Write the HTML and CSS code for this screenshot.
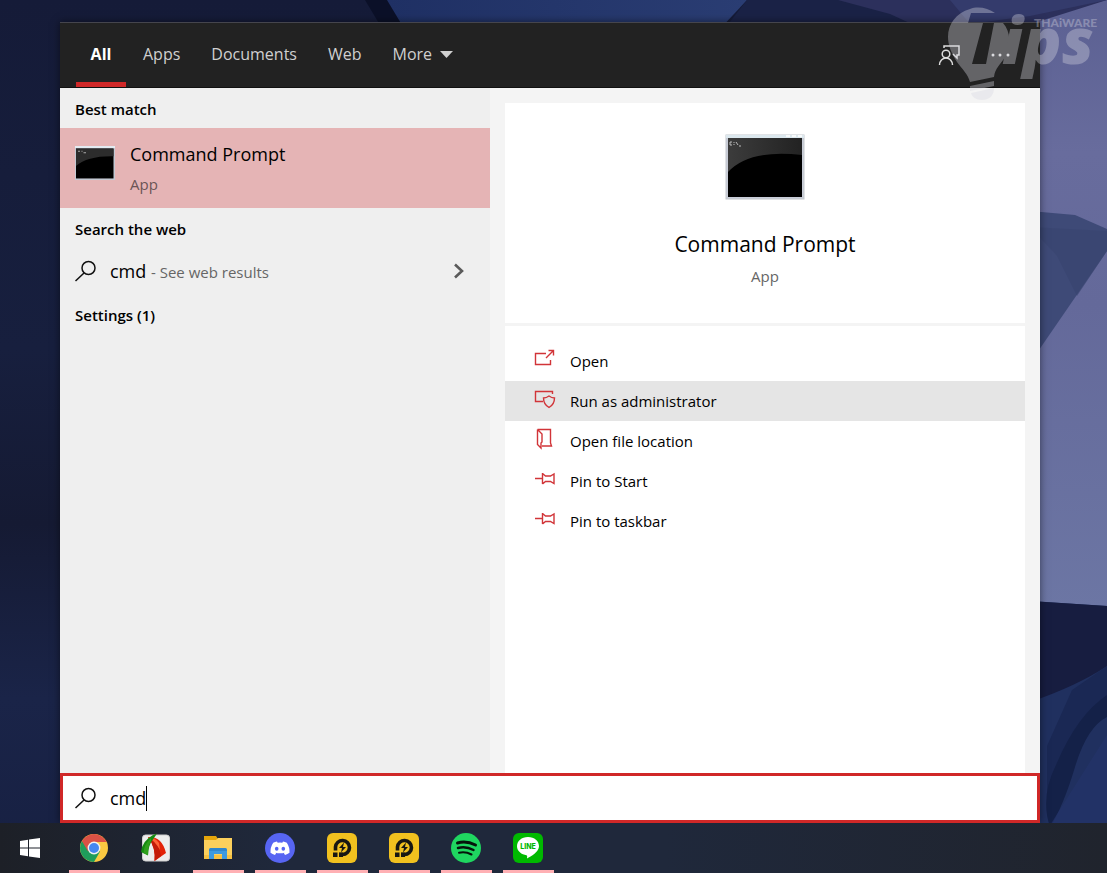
FILE: index.html
```
<!DOCTYPE html>
<html lang="en">
<head>
    <meta charset="UTF-8">
    <meta name="viewport" content="width=device-width, initial-scale=1.0">
    <link rel="stylesheet" href="styles.css">
    <title>Search</title>
</head>
<body>
    <!-- wallpaper -->
    <svg class="wallpaper" viewBox="0 0 1107 873" preserveAspectRatio="none" aria-hidden="true">
        <defs>
            <linearGradient id="left" x1="0" y1="0" x2="0" y2="1">
                <stop offset="0" stop-color="#151b38"/>
                <stop offset="0.4" stop-color="#171f3e"/>
                <stop offset="0.6" stop-color="#151a33"/>
                <stop offset="0.8" stop-color="#1a2448"/>
                <stop offset="1" stop-color="#172042"/>
            </linearGradient>
            <linearGradient id="top" x1="0" y1="0" x2="1" y2="0">
                <stop offset="0" stop-color="#1f3064"/>
                <stop offset="1" stop-color="#2a3d73"/>
            </linearGradient>
            <linearGradient id="right" x1="0" y1="0" x2="0" y2="1">
                <stop offset="0" stop-color="#5b6092"/>
                <stop offset="0.25" stop-color="#686c9d"/>
                <stop offset="0.5" stop-color="#64699a"/>
                <stop offset="1" stop-color="#6c76a4"/>
            </linearGradient>
        </defs>
        <rect width="1107" height="873" fill="url(#left)"/>
        <path d="M365 0h25l18 30h-25z" fill="#0b1028"/>
        <path d="M387 0h360l-28 30H405z" fill="url(#top)"/>
        <path d="M747 0h360v60H700z" fill="#1a2246"/>
        <path d="M838 0h269v60H990L890 14z" fill="#2c305c"/>
        <path d="M980 40L1107 0v610l-80-8z" fill="url(#right)"/>
        <path d="M970 24l60-8 77-16H950z" fill="#343b6c"/>
        <path d="M1030 211l45 4 32 14v22l-77 112z" fill="#3e4a77"/>
        <path d="M1030 227l77 4v20l-30 45-20-40z" fill="#394470" opacity=".6"/>
        <path d="M1030 601l77 5v267h-77z" fill="#20305f"/>
        <path d="M1030 601l77 5v60q-30 20-77 36z" fill="#171d40"/>
        <path d="M1072 690l35-24v30q-30 20-38 60l-22 50v-60z" fill="#1a2854"/>
        <path d="M1107 695v22q-20 10-32 50t-25 60q-10-30 6-62 21-50 51-70z" fill="#142148"/>
        <path d="M1107 735l-60 95h60z" fill="#24346a" opacity=".6"/>
    </svg>

    <main class="desktop">
        <section class="panel">
            <nav class="tabs">
                <button class="tab active">All</button>
                <button class="tab">Apps</button>
                <button class="tab">Documents</button>
                <button class="tab">Web</button>
                <button class="tab more">More
                    <svg width="13" height="7" viewBox="0 0 13 7"><path d="M0 0h13L6.500 7z" fill="currentColor"/></svg>
                </button>
                <div class="tools">
                    <button class="tool" aria-label="Feedback">
                        <svg width="22" height="22" viewBox="0 0 22 22" fill="none" stroke="#ddd" stroke-width="1.500">
                            <path d="M6 4V2h15v9h-2v3l-4-4"/>
                            <circle cx="8" cy="10" r="3.800"/>
                            <path d="M1.500 21c0-4 3-7 6.500-7s6.500 3 6.500 7"/>
                        </svg>
                    </button>
                    <button class="tool" aria-label="Options">
                        <svg width="20" height="22" viewBox="0 0 20 22" fill="#ddd"><circle cx="3" cy="11" r="1.500"/><circle cx="10" cy="11" r="1.500"/><circle cx="18" cy="11" r="1.500"/></svg>
                    </button>
                </div>
            </nav>

            <div class="content">
                <div class="results">
                    <h2 class="group">Best match</h2>
                    <button class="best">
                        <svg class="cmd-small" width="40" height="34" viewBox="0 0 80 66" preserveAspectRatio="none">
                            <rect width="80" height="66" fill="#c4c9d3"/>
                            <rect width="80" height="4" fill="#e3ebf1"/>
                            <rect x="2" y="5" width="75" height="58" fill="#000"/>
                            <path d="M2 5h75v15Q25 19 2 39z" fill="#2c2c2c"/>
                            <path d="M6 10h4m3 0h2m2 3h5" stroke="#aaa" stroke-width="2"/>
                        </svg>
                        <span class="names">
                            <span class="name">Command Prompt</span>
                            <span class="kind">App</span>
                        </span>
                    </button>
                    <h2 class="group">Search the web</h2>
                    <button class="web">
                        <svg width="22" height="22" viewBox="0 0 22 22" fill="none" stroke="#111" stroke-width="1.500"><circle cx="13.500" cy="8" r="6.500"/><path d="M9 13l-8.500 8"/></svg>
                        <span class="query">cmd <span class="hint">- See web results</span></span>
                        <svg class="chevron" width="10" height="16" viewBox="0 0 10 16" fill="none" stroke="#5a5a5a" stroke-width="2.600"><path d="M1 1.500L8 8l-7 6.500"/></svg>
                    </button>
                    <h2 class="group">Settings (1)</h2>
                </div>

                <div class="details">
                    <div class="app">
                        <svg width="80" height="66" viewBox="0 0 80 66">
                            <defs>
                                <linearGradient id="gloss" x1="0" y1="0" x2="1" y2="0">
                                    <stop offset="0" stop-color="#3c3c3c"/>
                                    <stop offset="1" stop-color="#222"/>
                                </linearGradient>
                            </defs>
                            <rect x="1" y="1" width="78" height="64" fill="#c9cdd8" stroke="#c3c8cd"/>
                            <rect x="1" y="1" width="78" height="3" fill="#dce8ee"/>
                            <path d="M61 2h4m2 0h4m2 0h4" stroke="#fff" stroke-width="1.500"/>
                            <rect x="3" y="4" width="74" height="59" fill="#000"/>
                            <path d="M3 4h74v17Q24 15 3 38z" fill="url(#gloss)"/>
                            <path d="M7 8H5v3h2M9 8v1m0 1v1m2-3l2 3m1 1h2" stroke="#bbb" fill="none"/>
                        </svg>
                        <h1>Command Prompt</h1>
                        <p>App</p>
                    </div>
                    <div class="actions">
                        <button class="action">
                            <svg width="22" height="22" viewBox="0 0 22 22"><path d="M12 5.500H1.500v11h15V12M12 10l7-7M14.500 2.500h5v5"/></svg>
                            Open
                        </button>
                        <button class="action selected">
                            <svg width="22" height="22" viewBox="0 0 22 22"><path d="M9 13.500H1.500v-10h17V6M15 8c-2 1.500-3.500 2-5.500 2 0 5 2 7.500 5.500 9.500 3.500-2 5.500-4.500 5.500-9.500-2 0-3.500-.5-5.500-2z"/></svg>
                            Run as administrator
                        </button>
                        <button class="action">
                            <svg width="22" height="22" viewBox="0 0 22 22"><path d="M3.500 1.500h13V15l1 3H8M3.500 1.500v15L7 20v-5l1-1V6L3.500 1.500"/></svg>
                            Open file location
                        </button>
                        <button class="action">
                            <svg width="22" height="22" viewBox="0 0 22 22"><path d="M1 10.500h7M8.500 5v11M8.500 5.500l3 2.500h5l3.500-2v9.500l-3.500-2h-5l-3 2.500"/></svg>
                            Pin to Start
                        </button>
                        <button class="action">
                            <svg width="22" height="22" viewBox="0 0 22 22"><path d="M1 10.500h7M8.500 5v11M8.500 5.500l3 2.500h5l3.500-2v9.500l-3.500-2h-5l-3 2.500"/></svg>
                            Pin to taskbar
                        </button>
                    </div>
                </div>
            </div>

            <label class="search">
                <svg width="22" height="22" viewBox="0 0 22 22" fill="none" stroke="#111" stroke-width="1.500"><circle cx="13.500" cy="8" r="6.500"/><path d="M9 13l-8.500 8"/></svg>
                <input type="text" value="cmd" size="3" aria-label="Search">
                <span class="caret"></span>
            </label>
        </section>
    </main>

    <footer class="taskbar">
        <button class="start" aria-label="Start">
            <svg width="20" height="20" viewBox="0 0 20 20" fill="#fff"><path d="M0 3l8-1.200V9.500H0zM9 1.600L20 0v9.500H9zM0 10.500h8v7.700L0 17zM9 10.500h11V20L9 18.400z"/></svg>
        </button>
        <button class="task open" aria-label="Chrome">
            <svg width="30" height="30" viewBox="0 0 30 30">
                <circle cx="15" cy="15" r="14" fill="#fbc941"/>
                <path d="M2.900 8A14 14 0 0 0 15 29l6-10.500-6-3.500z" fill="#1f9d5b"/>
                <path d="M2.900 8l6.200 10.500L15 9h12.600a14 14 0 0 0-.5-1A14 14 0 0 0 2.900 8z" fill="#db5145"/>
                <circle cx="15" cy="15" r="6.400" fill="#f1f1f1"/>
                <circle cx="15" cy="15" r="5" fill="#4587f0"/>
            </svg>
        </button>
        <button class="task" aria-label="FastStone Capture">
            <svg width="30" height="30" viewBox="0 0 30 30">
                <rect x="1.500" y="2" width="27" height="26" rx="3" fill="#ededed" stroke="#cfcfcf"/>
                <path d="M7 4Q21 3 25 20L13.500 28Q15 15 7 4z" fill="#e32208"/>
                <path d="M7 4Q18 8 20 23l-6.500 5Q15 15 7 4z" fill="#c41a08"/>
                <path d="M7 4q7 0 11 6l1 7Q14 8 7 4z" fill="#ff6236"/>
                <path d="M16 .5L12 2Q1 8 0 19l7 3.500Q7 12 13 5z" fill="#168a12"/>
                <path d="M10 5Q3 11 2.500 20L7 22Q7 13 10 8z" fill="#2fa01c"/>
            </svg>
        </button>
        <button class="task open" aria-label="File Explorer">
            <svg width="30" height="30" viewBox="0 0 30 30">
                <path d="M1 3h12l2 3h13v5H1z" fill="#e5a50b"/>
                <path d="M1 7h12l2-2h14v21H1z" fill="#fcd05c"/>
                <path d="M1 22h28v4H1z" fill="#f5c142"/>
                <path d="M6 26V17q0-2 2-2h14q2 0 2 2v9h-5v-5h-8v5z" fill="#3c9adf"/>
                <path d="M8 15h14q2 0 2 3H6q0-3 2-3z" fill="#2f86cc"/>
            </svg>
        </button>
        <button class="task open" aria-label="Discord">
            <svg width="30" height="30" viewBox="0 0 30 30">
                <circle cx="15" cy="15" r="15" fill="#5765f2"/>
                <path d="M12 8.500l.7 1.200q2.300-.4 4.600 0l.7-1.200q2 .3 3.800 1.200 3 4.500 2.700 10-2 1.500-4.500 2.200l-1.200-1.800 1.200-.7q-5 1.800-10 0l1.200.7L10 21.900q-2.500-.7-4.500-2.200-.3-5.500 2.700-10Q10 8.800 12 8.500z" fill="#fff"/>
                <ellipse cx="11.700" cy="15.700" rx="1.800" ry="2" fill="#5765f2"/>
                <ellipse cx="18.300" cy="15.700" rx="1.800" ry="2" fill="#5765f2"/>
            </svg>
        </button>
        <button class="task open" aria-label="LDPlayer">
            <svg width="30" height="30" viewBox="0 0 30 30">
                <rect width="30" height="30" rx="6" fill="#f1c11f"/>
                <path d="M8.500 17.500V14a7 7 0 1 1 7 7.500H12" fill="none" stroke="#171713" stroke-width="3.600"/>
                <path d="M6 19.500h4.500V24H6zM12 19.500h4V24h-4zM17 9.500l-5 5.500h3l-1 4.500 5-5.500h-3z" fill="#171713"/>
            </svg>
        </button>
        <button class="task open" aria-label="LDMultiPlayer">
            <svg width="30" height="30" viewBox="0 0 30 30">
                <rect width="30" height="30" rx="6" fill="#f1c11f"/>
                <path d="M8.500 17.500V14a7 7 0 1 1 7 7.500H12" fill="none" stroke="#171713" stroke-width="3.600"/>
                <path d="M6 19.500h4.500V24H6zM12 19.500h4V24h-4zM17 9.500l-5 5.500h3l-1 4.500 5-5.500h-3z" fill="#171713"/>
            </svg>
        </button>
        <button class="task open" aria-label="Spotify">
            <svg width="30" height="30" viewBox="0 0 30 30">
                <circle cx="15" cy="15" r="15" fill="#1fd760"/>
                <path d="M6.500 10q9-2.500 18 2" fill="none" stroke="#06150b" stroke-width="3" stroke-linecap="round"/>
                <path d="M7 15q8-2 15.500 2" fill="none" stroke="#06150b" stroke-width="2.500" stroke-linecap="round"/>
                <path d="M8 19.700q6.500-1.500 12.500 1.800" fill="none" stroke="#06150b" stroke-width="2" stroke-linecap="round"/>
            </svg>
        </button>
        <button class="task open" aria-label="LINE">
            <svg width="30" height="30" viewBox="0 0 30 30">
                <rect width="30" height="30" rx="6" fill="#00b900"/>
                <path d="M15 4C8.500 4 4 8 4 13.300c0 5 4.500 8.300 9.500 9 1 .3.700 1.500.5 3.200 4-2 12-6.500 12-12.200C26 8 21.500 4 15 4z" fill="#fff"/>
                <text class="line-text" x="15" y="16" text-anchor="middle">LINE</text>
            </svg>
        </button>
    </footer>

    <!-- site logo over the corner -->
    <svg class="watermark" width="160" height="105" viewBox="0 0 160 105" aria-hidden="true">
        <path d="M55 13C48 8 38 6 30 9 16 13 8 24 8 37c0 9 4 17 9 25 5 7 11 12 13 20l24-5c1-9 7-13 11-20 6-12 6-25-2-34h-9l-8 41H32l11-41H28l3-10z"/>
        <path d="M30 86l24-5v5l-24 5zM31 93l23-5c0 7-4 12-12 12-6 0-10-3-11-7z"/>
        <text class="ips" x="62" y="64">ips</text>
        <text class="brand" x="94" y="27">THAiWARE</text>
    </svg>
</body>
</html>
```
FILE: styles.css
```
* {
    box-sizing: border-box;
}

body {
    margin: 0;
    height: 100vh;
    display: flex;
    flex-direction: column;
    overflow: hidden;
    background-color: #171f3e;
    font-family: "Open Sans", "Noto Sans", sans-serif;
    font-size: 15px;
    color: #000;
}

button {
    margin: 0;
    padding: 0;
    border: none;
    background: none;
    font: inherit;
    color: inherit;
    text-align: left;
    cursor: pointer;
}

svg {
    display: block;
    flex: none;
}

.wallpaper {
    position: absolute;
    top: 0;
    left: 0;
    width: 100%;
    height: 100%;
    z-index: -1;
}

.desktop {
    flex: 1;
    display: flex;
    min-height: 0;
    padding: 22px 67px 0 60px;
}

.panel {
    flex: 1;
    display: flex;
    flex-direction: column;
    min-width: 0;
    box-shadow: 0 0 8px rgba(0, 0, 0, 0.5);
}

/* top tabs */
.tabs {
    display: flex;
    height: 66px;
    padding: 0 30px 0 16px;
    background-color: #222;
    border-top: 1px solid #45454d;
    border-bottom: 1px solid #111;
    color: #d0d0d0;
    font-size: 16px;
}

.tab {
    height: 64px;
    margin-right: 17px;
    border-bottom: 5px solid transparent;
    border-top: 3px solid transparent;
}

.tab + .tab {
    margin-right: 31px;
}

.tab.active {
    width: 50px;
    border-bottom-color: #d02828;
    color: #fff;
    font-weight: 700;
    text-align: center;
}

.more {
    display: flex;
    align-items: center;
    gap: 8px;
}

.tools {
    display: flex;
    align-items: center;
    gap: 30px;
    margin-left: auto;
}

/* results */
.content {
    flex: 1;
    display: flex;
    min-height: 0;
}

.results {
    flex: 0 0 430px;
    background-color: #efefef;
}

.group {
    margin: 0;
    padding: 2px 15px 0;
    font-size: 15px;
    font-weight: 600;
    line-height: 38px;
}

.best {
    display: flex;
    gap: 15px;
    width: 100%;
    height: 80px;
    padding: 11px 15px 13px;
    background-color: #e5b4b5;
}

.cmd-small {
    margin-top: 7px;
}

.names {
    display: flex;
    flex-direction: column;
    gap: 3px;
}

.name {
    font-size: 18px;
    line-height: 30px;
}

.kind {
    line-height: 24px;
    color: #6b5556;
}

.web {
    display: flex;
    align-items: center;
    width: 100%;
    height: 46px;
    padding: 0 26px 0 15px;
}

.query {
    flex: 1;
    padding-left: 13px;
    font-size: 18px;
}

.hint {
    font-size: 15px;
    color: #666;
}

/* details */
.details {
    flex: 1;
    display: flex;
    flex-direction: column;
    padding: 15px 15px 0;
    background-color: #f4f4f4;
}

.app {
    display: flex;
    flex-direction: column;
    align-items: center;
    height: 220px;
    padding-top: 31px;
    background-color: #fff;
}

.app h1 {
    margin: 28px 0 0;
    font-size: 21px;
    font-weight: 400;
    line-height: 32px;
}

.app p {
    margin: 4px 0 0;
    line-height: 24px;
    color: #666;
}

.actions {
    flex: 1;
    margin-top: 3px;
    padding-top: 15px;
    background-color: #fff;
}

.action {
    display: flex;
    align-items: center;
    gap: 14px;
    width: 100%;
    height: 40px;
    padding-left: 29px;
}

.action svg {
    margin-bottom: 5px;
    fill: none;
    stroke: #d13438;
    stroke-width: 1.4;
}

.action.selected {
    background-color: #e5e5e5;
}

/* search box */
.search {
    display: flex;
    align-items: center;
    height: 50px;
    padding-left: 12px;
    background-color: #fff;
    border: 3px solid #d02828;
}

.search input {
    width: 36px;
    margin-left: 13px;
    padding: 0;
    border: none;
    outline: none;
    font: inherit;
    font-size: 18px;
}

.caret {
    width: 1px;
    height: 25px;
    background-color: #000;
}

/* taskbar */
.taskbar {
    display: flex;
    height: 50px;
    background: linear-gradient(to right, #1d2027, #1f283b 25%, #1f283b 60%, #20242d);
}

.start {
    display: flex;
    align-items: center;
    justify-content: center;
    width: 60px;
    margin-right: 9px;
}

.task {
    display: flex;
    align-items: center;
    justify-content: center;
    width: 51px;
    margin-right: 11px;
    padding-right: 1px;
    border-top: 3px solid transparent;
    border-bottom: 3px solid transparent;
}

.task.open {
    border-bottom-color: #ffb0b4;
}

.line-text {
    font-family: Inter, sans-serif;
    font-size: 7px;
    font-weight: 800;
    fill: #00b900;
}

.watermark {
    position: absolute;
    top: 0;
    right: 7px;
    overflow: visible;
    fill: #d8d8e2;
    opacity: 0.36;
    pointer-events: none;
}

.ips {
    font-size: 64px;
    font-style: italic;
    font-weight: 800;
}

.brand {
    font-family: Lato, sans-serif;
    font-size: 12px;
    font-weight: 900;
}
```
